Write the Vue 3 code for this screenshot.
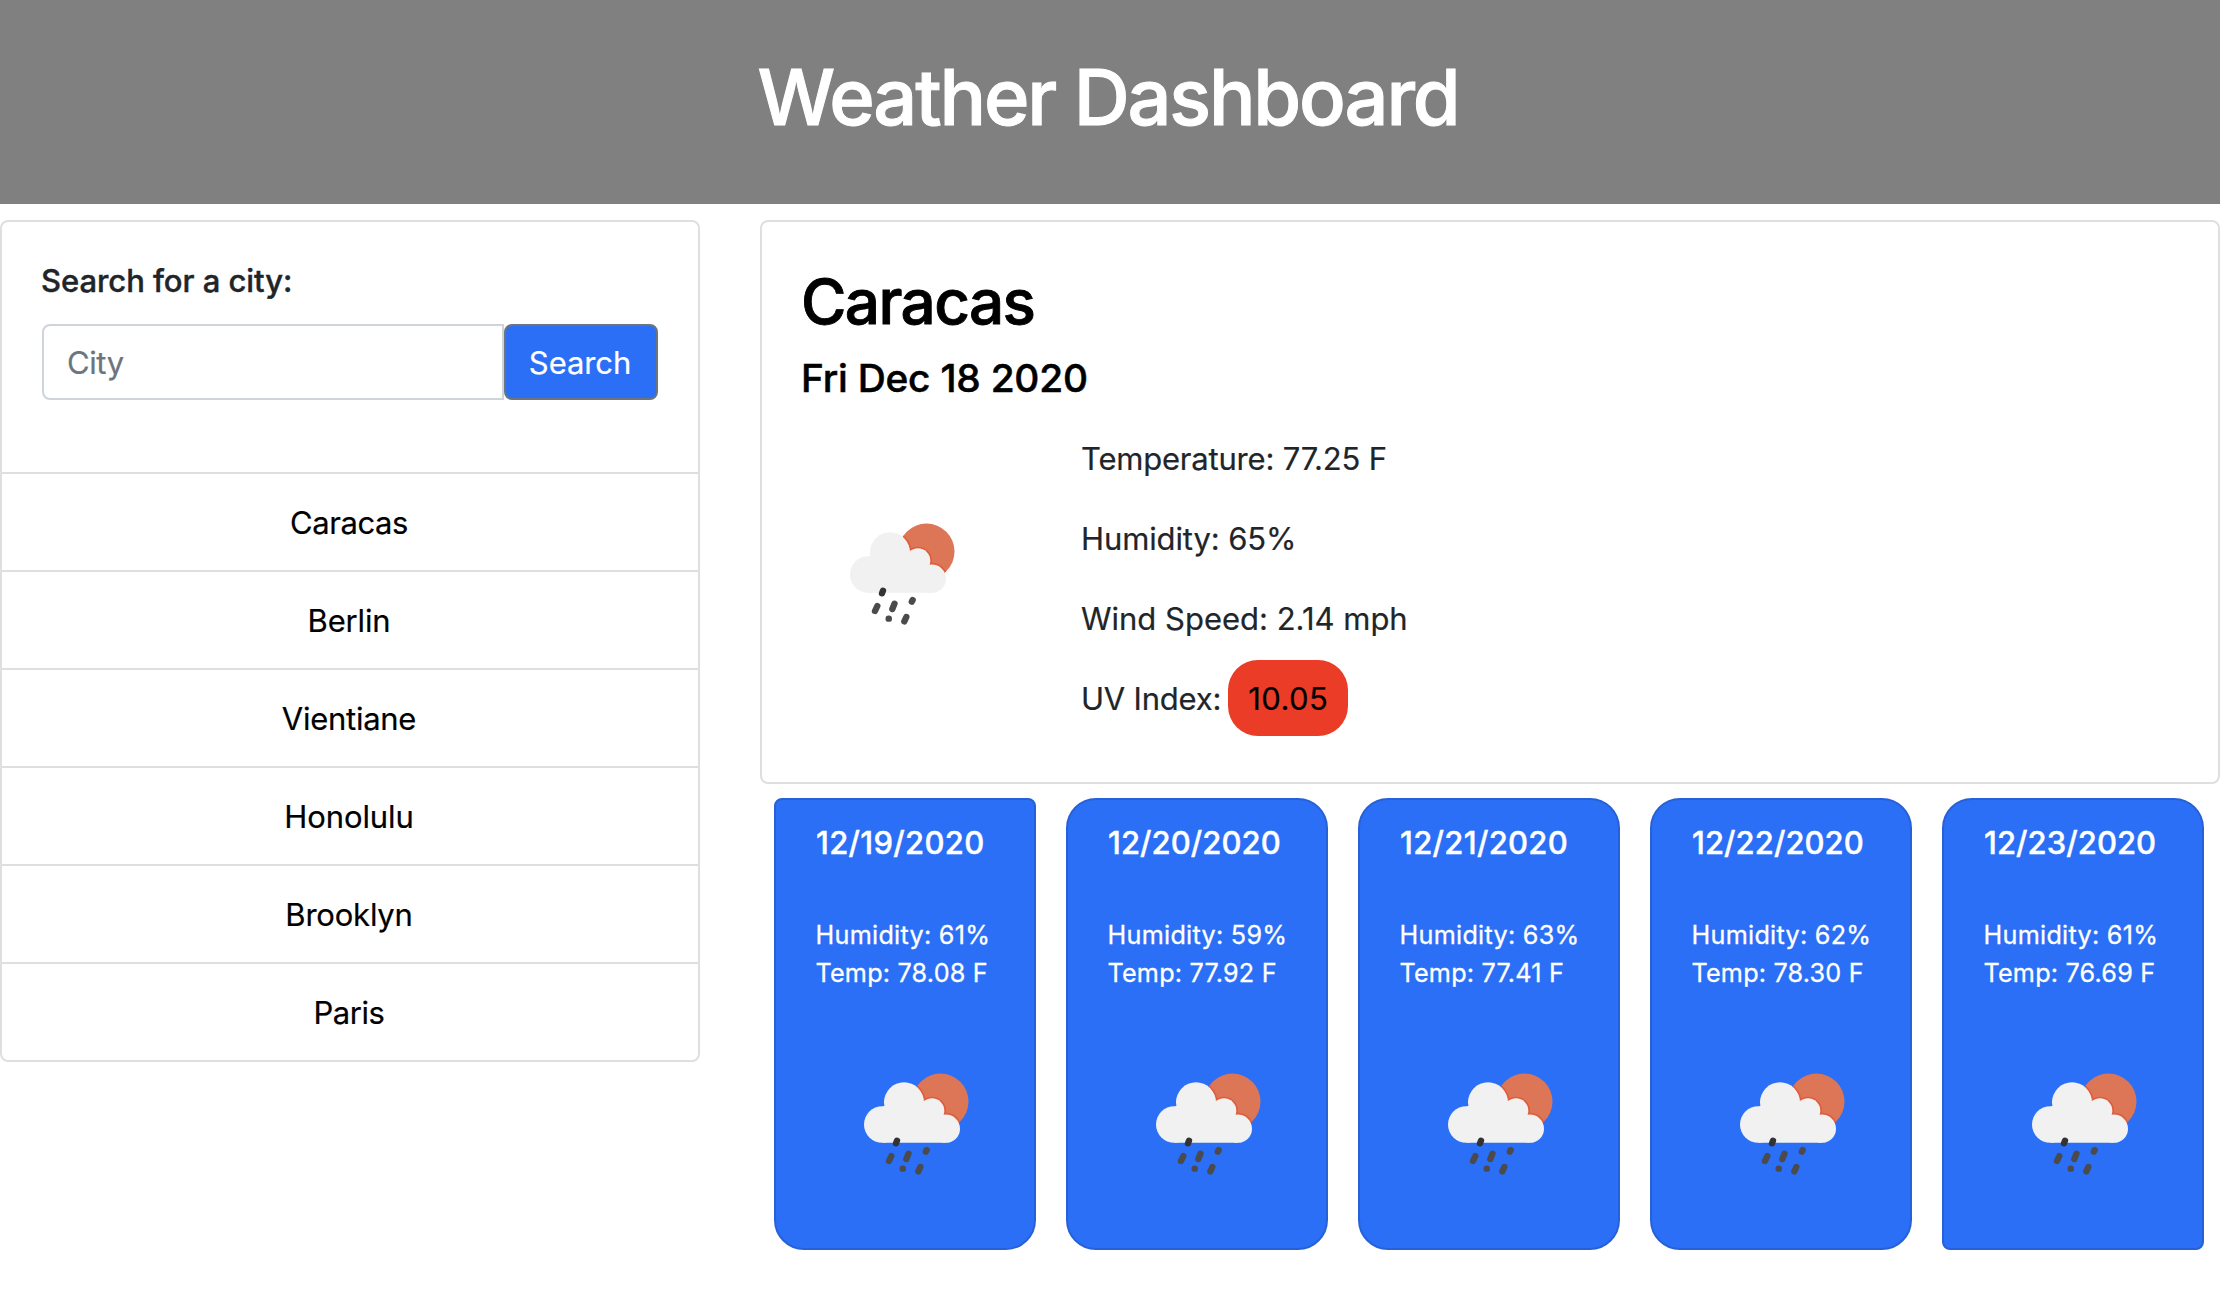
<script setup>
const cities = [
  { name: 'Caracas', spacing: -0.42 },
  { name: 'Berlin', spacing: -0.15 },
  { name: 'Vientiane', spacing: -0.26 },
  { name: 'Honolulu', spacing: -0.1 },
  { name: 'Brooklyn', spacing: -0.22 },
  { name: 'Paris', spacing: -0.45 },
]

const forecast = [
  { date: '12/19/2020', humidity: 61, temp: '78.08', spacing: 0.3 },
  { date: '12/20/2020', humidity: 59, temp: '77.92', spacing: 0.05 },
  { date: '12/21/2020', humidity: 63, temp: '77.41', spacing: 0.3 },
  { date: '12/22/2020', humidity: 62, temp: '78.30', spacing: 0.05 },
  { date: '12/23/2020', humidity: 61, temp: '76.69', spacing: 0.05 },
]
</script>

<template>
  <svg class="defs" width="0" height="0" aria-hidden="true">
    <defs>
      <clipPath id="sun-clip"><circle cx="271.5" cy="124.5" r="84" /></clipPath>
      <g id="cloud-shape">
        <circle cx="97" cy="193.5" r="55" />
        <circle cx="162" cy="127" r="60" />
        <circle cx="246" cy="152" r="37" />
        <circle cx="287.500" cy="206" r="42.500" />
        <path d="M97 140 L162 120 L246 140 L287.500 190 V248.500 H97 Z" />
      </g>
      <symbol id="rain" viewBox="-102 -108 600 600">
        <circle cx="271.5" cy="124.5" r="84" fill="#dc7656" />
        <use href="#cloud-shape" clip-path="url(#sun-clip)" fill="#e05c3a" stroke="#e05c3a" stroke-width="10" />
        <use href="#cloud-shape" fill="#f1f1f1" />
        <g stroke="#4b4b4d" stroke-width="19" stroke-linecap="round" fill="none">
          <path stroke="#333336" d="M141 242 L138 250" />
          <path d="M124 288 L117 303" />
          <path d="M175.500 281 L169 297" />
          <path d="M230 270 L227.500 275" />
          <path d="M158 326 h.5" />
          <path d="M211 321 L205 334" />
        </g>
      </symbol>
    </defs>
  </svg>

  <div class="page">
    <header class="banner"><h1>Weather Dashboard</h1></header>

    <div class="columns">
      <aside class="card sidebar">
        <form class="search" @submit.prevent>
          <label for="city">Search for a city:</label>
          <div class="group">
            <input id="city" type="text" placeholder="City" />
            <button type="submit">Search</button>
          </div>
        </form>
        <ul class="cities">
          <li v-for="c in cities" :key="c.name" :style="{ letterSpacing: c.spacing + 'px' }">{{ c.name }}</li>
        </ul>
      </aside>

      <main class="content">
        <section class="card current">
          <h2>Caracas</h2>
          <h3>Fri Dec 18 2020</h3>
          <div class="today">
            <svg class="icon"><use href="#rain" /></svg>
            <div class="facts">
              <p class="tight">Temperature: 77.25 F</p>
              <p class="snug">Humidity: 65%</p>
              <p>Wind Speed: 2.14 mph</p>
              <p class="tight">UV Index:<span class="uv">10.05</span></p>
            </div>
          </div>
        </section>

        <section class="forecast">
          <article v-for="d in forecast" :key="d.date" class="day">
            <h4 :style="{ letterSpacing: d.spacing + 'px' }">{{ d.date }}</h4>
            <p class="humidity">Humidity: {{ d.humidity }}%</p>
            <p class="temp">Temp: {{ d.temp }} F</p>
            <svg class="icon"><use href="#rain" /></svg>
          </article>
        </section>
      </main>
    </div>
  </div>
</template>

<style>
body {
  background: #fff;
}
</style>

<style scoped>
* {
  box-sizing: border-box;
  margin: 0;
  padding: 0;
}

.defs {
  position: absolute;
}

.page {
  width: 2220px;
  font-family: Inter, "Liberation Sans", sans-serif;
  font-size: 31px;
  font-weight: 400;
  line-height: 48px;
  color: #212529;
  -webkit-text-stroke: 0.2px currentColor;
}

.banner {
  height: 204px;
  padding-top: 49px;
  background: #808080;
  text-align: center;
}

h1 {
  font-size: 77.5px;
  font-weight: 500;
  line-height: 96px;
  letter-spacing: -2.15px;
  color: #fff;
  margin-right: 4px;
  -webkit-text-stroke-width: 1px;
}

.columns {
  display: flex;
  align-items: flex-start;
  gap: 60px;
  padding-top: 16px;
}

.card {
  border: 2px solid #dfdfdf;
  border-radius: 8px;
  background: #fff;
}

.sidebar {
  width: 700px;
}

.search {
  padding: 40px 40px 72px;
}

label {
  display: block;
  height: 38px;
  line-height: 38px;
  font-weight: 500;
  margin: 0 0 24px -1px;
  letter-spacing: -0.05px;
  -webkit-text-stroke-width: 0.4px;
}

.group {
  display: flex;
  height: 76px;
}

input,
button {
  font-family: inherit;
  font-size: 31px;
  font-weight: 400;
}

input {
  width: 462px;
  padding: 0 23px;
  border: 2px solid #ced4da;
  border-radius: 8px 0 0 8px;
  background: #fff;
  letter-spacing: -0.4px;
}

input::placeholder {
  color: #6c757d;
  opacity: 1;
}

button {
  width: 154px;
  padding-right: 2px;
  border: 2px solid #6c757d;
  border-radius: 8px;
  background: #2b6ff6;
  color: #fff;
  letter-spacing: -0.1px;
  -webkit-text-stroke: 0.2px #fff;
}

.cities {
  list-style: none;
}

li {
  height: 98px;
  padding: 25px 2px 0 0;
  border-top: 2px solid #dfdfdf;
  text-align: center;
  color: #000;
}

.content {
  width: 1460px;
}

.current {
  height: 564px;
  padding: 40px;
}

h2 {
  height: 77px;
  margin-left: -1px;
  font-size: 62px;
  font-weight: 500;
  line-height: 79px;
  letter-spacing: -1.6px;
  color: #000;
  -webkit-text-stroke-width: 0.9px;
}

h3 {
  margin: 15px 0 0 -1px;
  font-size: 38.8px;
  font-weight: 500;
  line-height: 48px;
  letter-spacing: -0.2px;
  color: #000;
  -webkit-text-stroke-width: 0.5px;
}

.today {
  display: flex;
  gap: 79px;
  padding-top: 33px;
}

.icon {
  display: block;
  flex: none;
  width: 200px;
  height: 200px;
  filter: blur(0.5px);
}

.today .icon {
  margin-top: 39px;
}

.facts {
  display: flex;
  flex-direction: column;
  gap: 32px;
}

.facts p {
  display: flex;
  align-items: center;
  height: 48px;
}

.facts .tight {
  letter-spacing: -0.2px;
}

.facts .snug {
  letter-spacing: -0.12px;
}

.facts .uv {
  width: 120px;
  height: 76px;
  margin: -15px 0 -13px 7px;
  border-radius: 30px;
  background: #ea3c26;
  color: #000;
  line-height: 78px;
  text-align: center;
  letter-spacing: 0.4px;
}

.forecast {
  display: flex;
  gap: 30px;
  padding: 14px 14px 0;
}

.day {
  width: 262px;
  height: 452px;
  padding: 24px 0 0 40px;
  border: 2px solid #2761d8;
  border-radius: 30px;
  background: #2b6ff6;
  color: #fff;
}

.day:first-child {
  border-radius: 8px 8px 30px 30px;
}

.day:last-child {
  border-radius: 30px 30px 8px 8px;
}

h4 {
  margin-bottom: 54px;
  font-size: 31px;
  font-weight: 500;
  line-height: 38px;
  -webkit-text-stroke-width: 0.4px;
}

.day p {
  height: 38px;
  margin-left: -0.5px;
  font-size: 25.2px;
  line-height: 38px;
  -webkit-text-stroke-width: 0.3px;
}

.day .humidity {
  letter-spacing: 0.28px;
}

.day .temp {
  letter-spacing: 0.2px;
}

.day .icon {
  margin-top: 32px;
}

.banner,
.day,
.uv,
h1,
h2,
h3,
li {
  -webkit-text-stroke-color: currentColor;
}
</style>
